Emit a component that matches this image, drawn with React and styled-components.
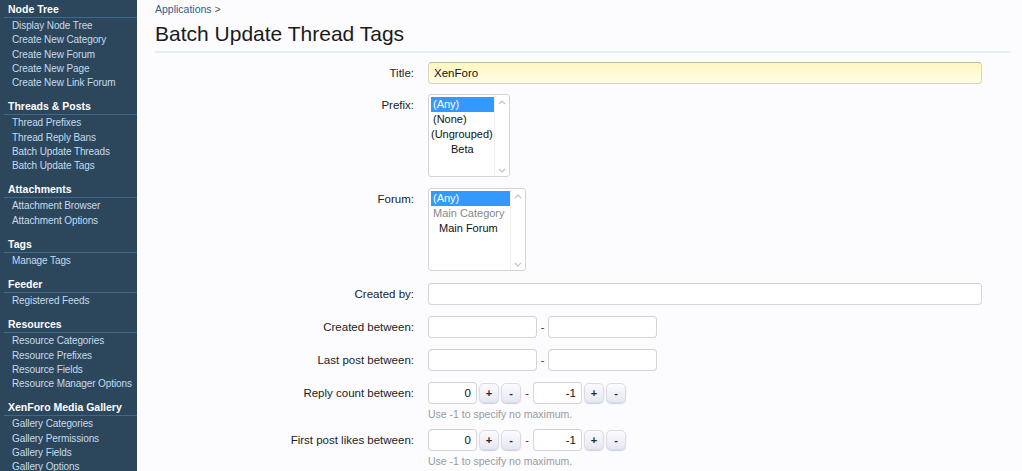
import React from "react";
import styled, { createGlobalStyle } from "styled-components";

const Global = createGlobalStyle`
  html, body { margin: 0; padding: 0; background: #fcfcff; }
  body { font-family: "Liberation Sans", Arial, sans-serif; }
  * { box-sizing: border-box; }
`;

const Page = styled.div`
  display: flex;
  width: 1022px;
  height: 471px;
  overflow: hidden;
`;

const Sidebar = styled.nav`
  width: 137px;
  flex: none;
  background: #2c465c;
  padding: 2px 0 0 4px;
`;

const Section = styled.div`
  margin-bottom: 9px;
`;

const SectionTitle = styled.div`
  color: #ffffff;
  font-weight: bold;
  font-size: 10.5px;
  line-height: 14px;
  padding: 0 0 1px 4px;
  margin-bottom: 1px;
  border-bottom: 1px solid #3b6a8e;
`;

const NavItem = styled.div`
  color: #c6dced;
  font-size: 10px;
  letter-spacing: -0.1px;
  line-height: 14.25px;
  padding-left: 8px;
  white-space: nowrap;
`;

const Main = styled.main`
  flex: 1;
  padding: 2px 12px 0 18px;
`;

const Breadcrumb = styled.div`
  font-size: 10.5px;
  line-height: 14px;
  color: #2b5f8e;
  span { color: #555; }
`;

const Title = styled.h1`
  margin: 4px 0 0;
  font-size: 21px;
  font-weight: normal;
  color: #1a1a1a;
  line-height: 28px;
  padding-bottom: 3px;
  border-bottom: 2px solid #e4eef8;
`;

const Form = styled.div`
  margin-top: 9px;
  padding-right: 28px;
`;

const Row = styled.div`
  display: grid;
  grid-template-columns: 259px 1fr;
  column-gap: 14px;
  margin-bottom: ${(p) => p.$gap ?? 11}px;
`;

const Label = styled.div`
  text-align: right;
  font-size: 11.5px;
  line-height: 14px;
  padding-top: ${(p) => p.$top ?? 4}px;
  color: #222;
`;

const Field = styled.div`
  display: flex;
  flex-direction: column;
  align-items: flex-start;
`;

const Inline = styled.div`
  display: flex;
  align-items: center;
  gap: 2px;
`;

const TextBox = styled.div`
  height: 22px;
  width: ${(p) => (p.$w ? `${p.$w}px` : "100%")};
  border: 1px solid ${(p) => (p.$yellow ? "#d8d6bd" : "#d6d6d6")};
  border-top-color: ${(p) => (p.$yellow ? "#b9b9ad" : "#d0d0d0")};
  border-radius: 4px;
  background: ${(p) =>
    p.$yellow ? "linear-gradient(#fff8bf, #fffce6)" : "#ffffff"};
  font-size: 11.5px;
  line-height: 20px;
  padding: 0 5px;
  color: #111;
  text-align: ${(p) => (p.$right ? "right" : "left")};
`;

const Dash = styled.span`
  font-size: 11px;
  color: #333;
  width: ${(p) => p.$w ?? 8}px;
  text-align: center;
`;

const SpinButton = styled.div`
  width: 20px;
  height: 20px;
  flex: none;
  border: 1px solid #d9dbe6;
  border-radius: 5px;
  background: linear-gradient(#fbfbff, #e6e8f2);
  box-shadow: 0 1px 1px rgba(120, 125, 150, 0.35);
  font-size: 11px;
  font-weight: bold;
  color: #2a2a2a;
  display: flex;
  align-items: center;
  justify-content: center;
  line-height: 1;
`;

const ListBox = styled.div`
  width: ${(p) => p.$w}px;
  height: 83px;
  border: 1px solid #d4d4d4;
  border-radius: 3px;
  background: #fff;
  display: flex;
  overflow: hidden;
`;

const Options = styled.div`
  flex: 1;
  padding: 2px 0 0 2px;
`;

const Option = styled.div`
  font-size: 11px;
  line-height: 15px;
  padding-left: ${(p) => (p.$indent !== undefined ? p.$indent : 2)}px;
  color: ${(p) => (p.$selected ? "#fff" : p.$muted ? "#888" : "#111")};
  background: ${(p) => (p.$selected ? "#3399ff" : "transparent")};
  white-space: nowrap;
`;

const ScrollTrack = styled.div`
  width: 15px;
  flex: none;
  display: flex;
  flex-direction: column;
  justify-content: space-between;
  align-items: center;
  padding: 5px 0 3px;
  border-left: 1px solid #f0f0f0;
`;

const Hint = styled.div`
  font-size: 10.5px;
  color: #9a9a9a;
  margin-top: 4px;
  line-height: 13px;
`;

const Chevron = ({ down }) => (
  <svg width="8" height="5" viewBox="0 0 8 5">
    <path
      d={down ? "M1 1 L4 4 L7 1" : "M1 4 L4 1 L7 4"}
      fill="none"
      stroke="#c3c3c3"
      strokeWidth="1.2"
    />
  </svg>
);

const nav = [
  ["Node Tree", ["Display Node Tree", "Create New Category", "Create New Forum", "Create New Page", "Create New Link Forum"]],
  ["Threads & Posts", ["Thread Prefixes", "Thread Reply Bans", "Batch Update Threads", "Batch Update Tags"]],
  ["Attachments", ["Attachment Browser", "Attachment Options"]],
  ["Tags", ["Manage Tags"]],
  ["Feeder", ["Registered Feeds"]],
  ["Resources", ["Resource Categories", "Resource Prefixes", "Resource Fields", "Resource Manager Options"]],
  ["XenForo Media Gallery", ["Gallery Categories", "Gallery Permissions", "Gallery Fields", "Gallery Options"]],
];

const SpinGroup = ({ value }) => (
  <Inline>
    <TextBox $w={49} $right>{value}</TextBox>
    <SpinButton>+</SpinButton>
    <SpinButton>-</SpinButton>
  </Inline>
);

export default function App() {
  return (
    <>
      <Global />
      <Page>
        <Sidebar>
          {nav.map(([title, items]) => (
            <Section key={title}>
              <SectionTitle>{title}</SectionTitle>
              {items.map((i) => (
                <NavItem key={i}>{i}</NavItem>
              ))}
            </Section>
          ))}
        </Sidebar>
        <Main>
          <Breadcrumb>
            Applications <span>&gt;</span>
          </Breadcrumb>
          <Title>Batch Update Thread Tags</Title>
          <Form>
            <Row $gap={10}>
              <Label>Title:</Label>
              <Field>
                <TextBox $yellow>XenForo</TextBox>
              </Field>
            </Row>
            <Row $gap={11}>
              <Label>Prefix:</Label>
              <Field>
                <ListBox $w={82}>
                  <Options>
                    <Option $selected>(Any)</Option>
                    <Option>(None)</Option>
                    <Option $indent={0}>(Ungrouped)</Option>
                    <Option $indent={20}>Beta</Option>
                  </Options>
                  <ScrollTrack>
                    <Chevron />
                    <Chevron down />
                  </ScrollTrack>
                </ListBox>
              </Field>
            </Row>
            <Row $gap={12}>
              <Label>Forum:</Label>
              <Field>
                <ListBox $w={98}>
                  <Options>
                    <Option $selected>(Any)</Option>
                    <Option $muted>Main Category</Option>
                    <Option $indent={8}>Main Forum</Option>
                  </Options>
                  <ScrollTrack>
                    <Chevron />
                    <Chevron down />
                  </ScrollTrack>
                </ListBox>
              </Field>
            </Row>
            <Row $gap={11}>
              <Label>Created by:</Label>
              <Field>
                <TextBox />
              </Field>
            </Row>
            <Row $gap={11}>
              <Label>Created between:</Label>
              <Field>
                <Inline>
                  <TextBox $w={109} />
                  <Dash $w={7}>-</Dash>
                  <TextBox $w={109} />
                </Inline>
              </Field>
            </Row>
            <Row $gap={11}>
              <Label>Last post between:</Label>
              <Field>
                <Inline>
                  <TextBox $w={109} />
                  <Dash $w={7}>-</Dash>
                  <TextBox $w={109} />
                </Inline>
              </Field>
            </Row>
            <Row $gap={8}>
              <Label>Reply count between:</Label>
              <Field>
                <Inline>
                  <SpinGroup value="0" />
                  <Dash>-</Dash>
                  <SpinGroup value="-1" />
                </Inline>
                <Hint>Use -1 to specify no maximum.</Hint>
              </Field>
            </Row>
            <Row $gap={8}>
              <Label>First post likes between:</Label>
              <Field>
                <Inline>
                  <SpinGroup value="0" />
                  <Dash>-</Dash>
                  <SpinGroup value="-1" />
                </Inline>
                <Hint>Use -1 to specify no maximum.</Hint>
              </Field>
            </Row>
          </Form>
        </Main>
      </Page>
    </>
  );
}
